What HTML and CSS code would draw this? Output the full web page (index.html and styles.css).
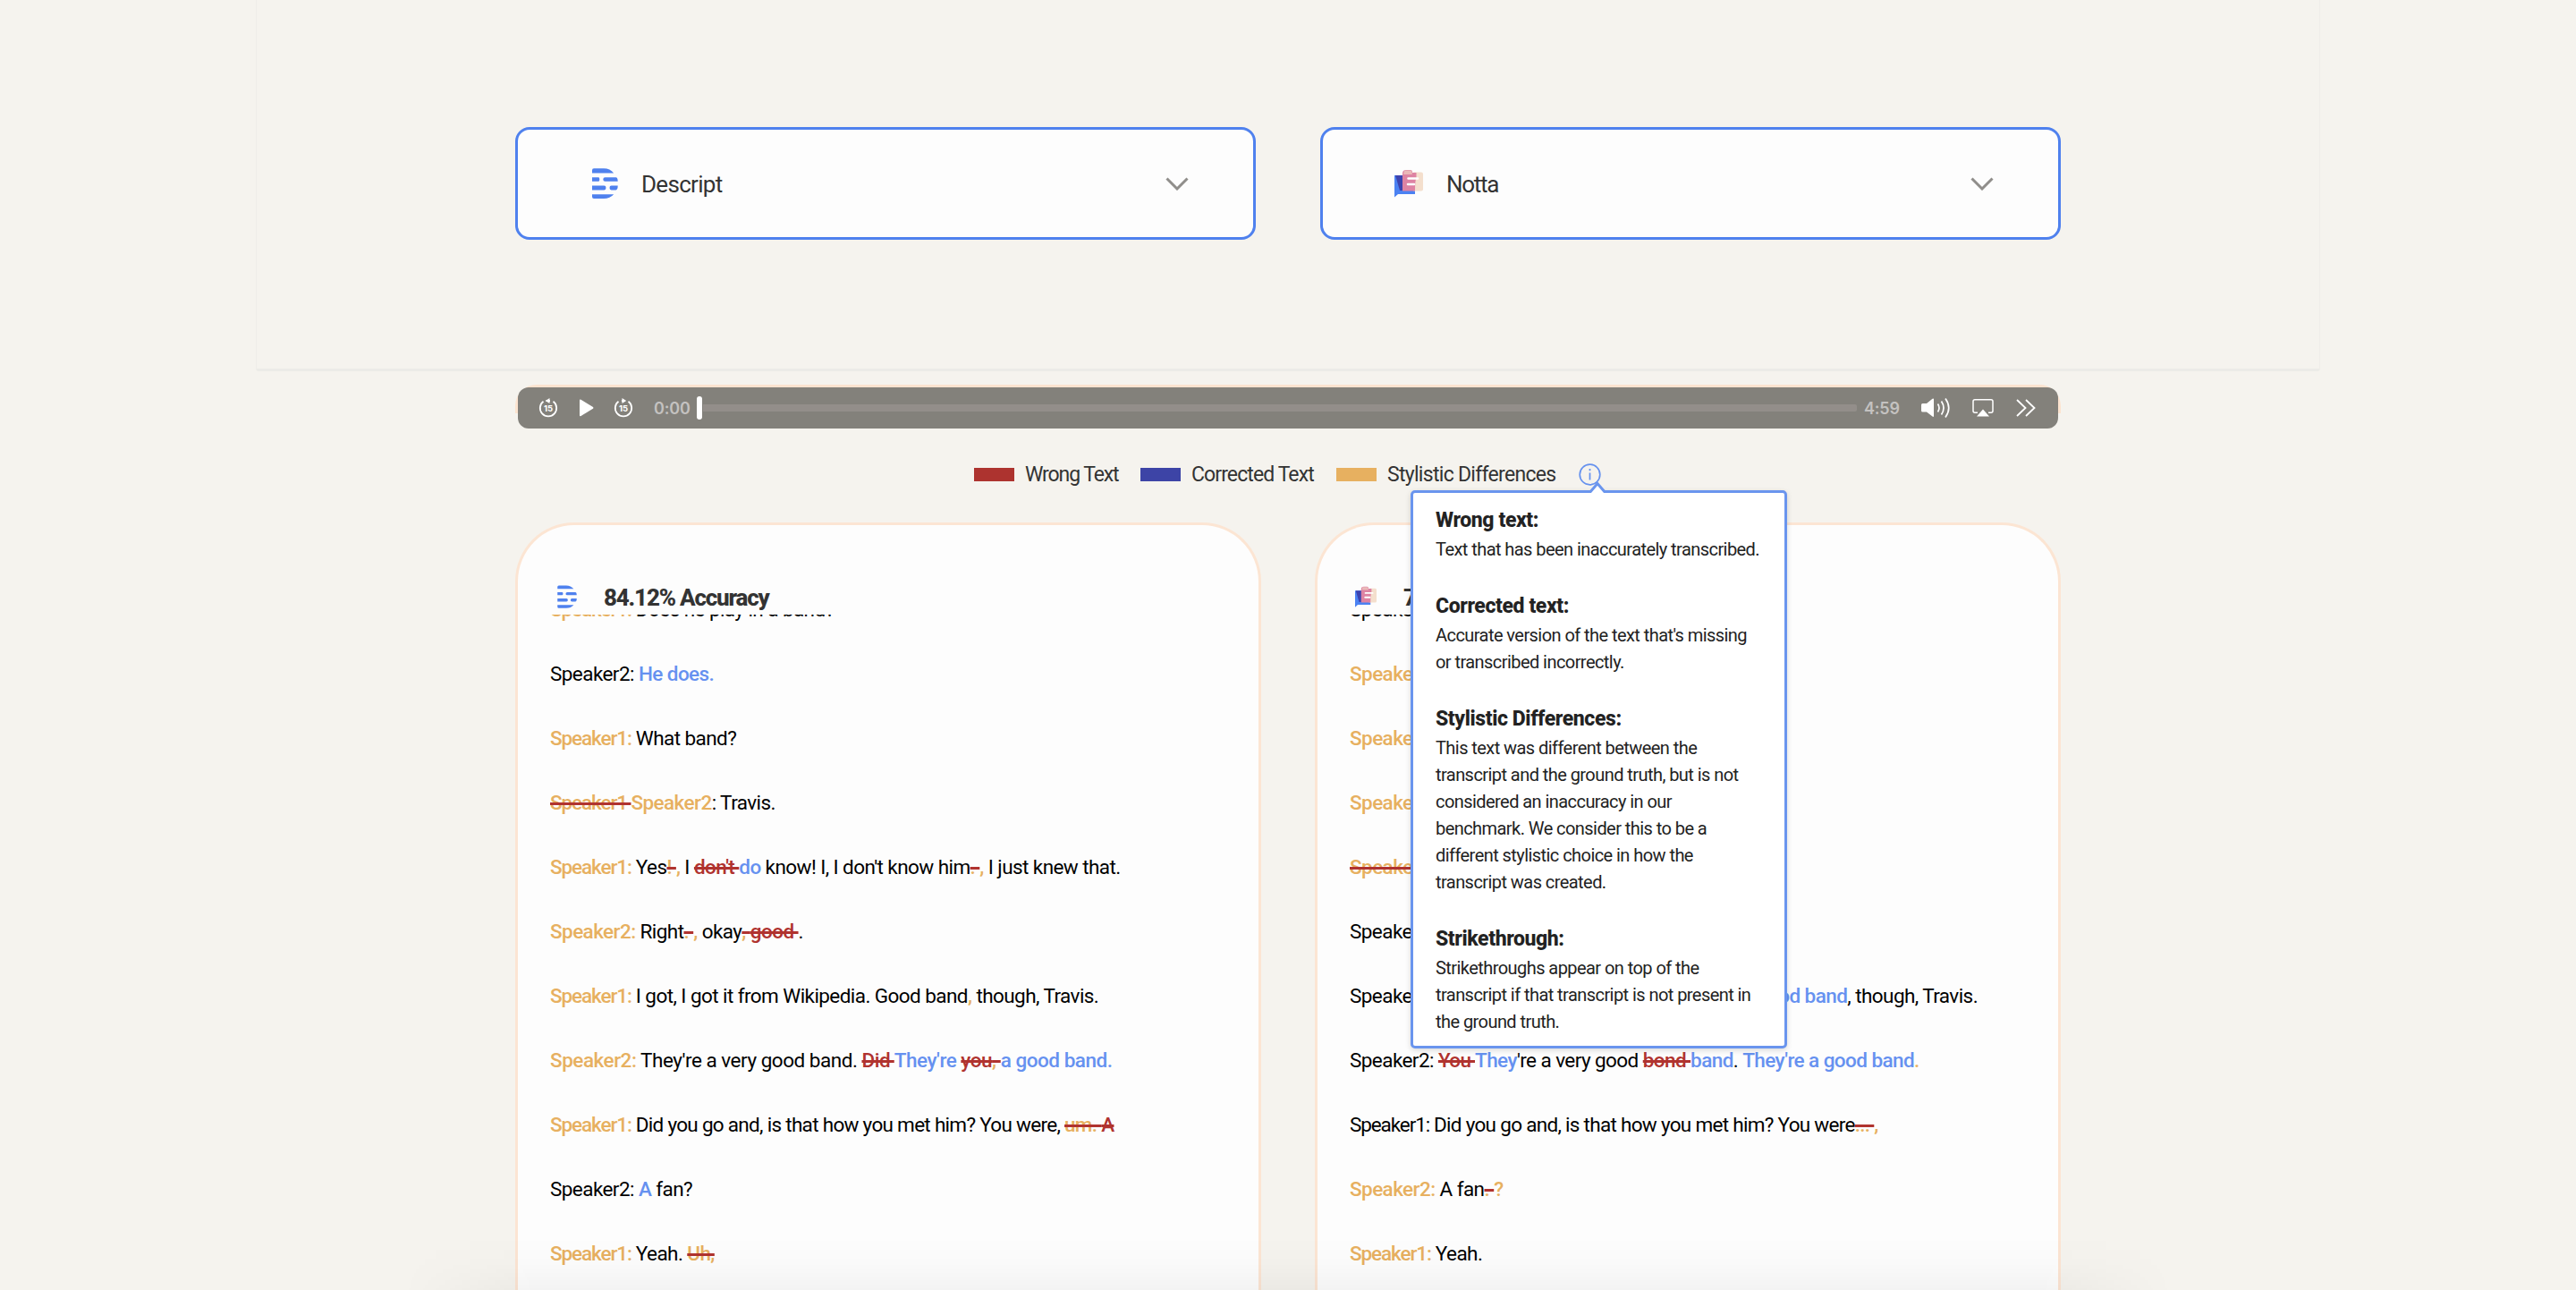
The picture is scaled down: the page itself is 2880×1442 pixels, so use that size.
FILE: index.html
```html
<!DOCTYPE html>
<html lang="en">
<head>
  <meta charset="UTF-8" />
  <meta name="viewport" content="width=device-width, initial-scale=1.0" />
  <title>Transcription Accuracy</title>
  <link rel="stylesheet" href="styles.css">
</head>
<body>
  <!-- shared icons -->
  <svg class="sprite" aria-hidden="true">
    <symbol id="descript" viewBox="0 0 48 48">
      <path d="M11 12.400V9.200Q11 7.200 13 7.200H24Q31 7.200 35.200 12.400ZM11 17.200H18.200Q19.300 17.200 19.300 19.400T18.200 21.800H11ZM25.500 17.200H37.500Q39.700 17.200 39.700 21.800H25.500Q23.300 21.800 23.300 19.500T25.500 17.200ZM11 26.600H24.500Q26.500 26.600 26.500 29T24.500 31.400H11ZM32.500 26.600H39.700Q39.700 31.400 37.500 31.400H32.500Q30.500 31.400 30.500 29T32.500 26.600ZM11 36.300H35.200Q31 41 24 41H13Q11 41 11 39Z" fill="#4f81ee"/>
    </symbol>
    <symbol id="notta" viewBox="0 0 48 48">
      <path d="M8 15H31V36H12L8 39.500Z" fill="#4b82f2"/>
      <path d="M9 15H18V32H14Z" fill="#3d43ae"/>
      <rect x="28" y="11.500" width="12" height="21" rx="2" fill="#f4dfcd"/>
      <path d="M17 13Q17 9 21 9H26Q28 9 28 12H32.500V18Q31 20 31 32.500H17Z" fill="#de83a3"/>
      <path d="M19 9.500H27L28 14H18Z" fill="#eab8b8"/>
      <path d="M23.500 18.500H34M23 25H30" stroke="#fff" stroke-width="2.600" stroke-linecap="round"/>
    </symbol>
    <symbol id="chevron" viewBox="0 0 26 15">
      <path d="M1.500 1.500L13 13L24.500 1.500" fill="none" stroke="#908e8b" stroke-width="3"/>
    </symbol>
  </svg>

  <section class="hero">
    <div class="picker">
      <svg class="logo"><use href="#descript"/></svg>
      <span>Descript</span>
      <svg class="chevron"><use href="#chevron"/></svg>
    </div>
    <div class="picker">
      <svg class="logo"><use href="#notta"/></svg>
      <span class="notta">Notta</span>
      <svg class="chevron"><use href="#chevron"/></svg>
    </div>
  </section>

  <div class="player-wrap">
    <div class="player">
      <svg class="skip" viewBox="0 0 22 22">
        <path d="M5.500 3.800A9.200 9.200 0 1 0 16.500 3.800M8.500 3H13" fill="none" stroke="#fff" stroke-width="1.800"/>
        <path d="M7.800 3L12.500 0V6Z" fill="#fff"/>
        <text x="11" y="15" text-anchor="middle">15</text>
      </svg>
      <svg class="play" viewBox="0 0 17 20"><path d="M1 1.500Q1 0 2.500 .8L16 8.900Q17 9.900 16 10.700L2.500 19Q1 19.700 1 18Z" fill="#fff"/></svg>
      <svg class="skip" viewBox="0 0 22 22">
        <path d="M5.500 3.800A9.200 9.200 0 1 0 16.500 3.800M9 3H13" fill="none" stroke="#fff" stroke-width="1.800"/>
        <path d="M14.200 3L9.500 0V6Z" fill="#fff"/>
        <text x="11" y="15" text-anchor="middle">15</text>
      </svg>
      <span class="time">0:00</span>
      <div class="knob"></div>
      <div class="track"></div>
      <span class="time total">4:59</span>
      <svg class="volume" viewBox="0 0 33 22">
        <path d="M0 7.500Q0 6 1.500 6H6L12.500 .8Q14 0 14 1.500V20Q14 21.500 12.500 20.600L6 15.500H1.500Q0 15.500 0 14Z" fill="#fff"/>
        <path d="M18.500 6.500Q21.500 11 18.500 15.500M22.500 3.500Q27.500 11 22.500 18.500M27 .5Q34.500 11 27 21.500" fill="none" stroke="#fff" stroke-width="1.700"/>
      </svg>
      <svg class="airplay" viewBox="0 0 24 20">
        <path d="M6 15.300H3Q1 15.300 1 13.300V2.700Q1 .8 3 .8H21Q23 .8 23 2.700V13.300Q23 15.300 21 15.300H18" fill="none" stroke="#fff" stroke-width="1.500"/>
        <path d="M5 19.500L12 11.500L19 19.500Z" fill="#fff"/>
      </svg>
      <svg class="more" viewBox="0 0 22 20"><path d="M1 1L10.500 10L1 19M11 1L20.500 10L11 19" fill="none" stroke="#fff" stroke-width="1.800"/></svg>
    </div>
  </div>

  <div class="legend">
    <i class="swatch red"></i><span class="legend-wrong">Wrong Text</span>
    <i class="swatch blue"></i><span class="legend-corrected">Corrected Text</span>
    <i class="swatch gold"></i><span class="legend-style">Stylistic Differences</span>
    <div class="info">
      <svg viewBox="0 0 25 25">
        <circle cx="12.500" cy="12.500" r="11.300" fill="none" stroke="#6591ee" stroke-width="1.700"/>
        <path d="M12.500 10.500V18.500M12.500 6V8.300" stroke="#6591ee" stroke-width="1.700"/>
      </svg>
      <div class="tooltip">
        <svg class="arrow" viewBox="0 0 20 13"><path d="M1 13L10 2.500L19 13" fill="#fff" stroke="#6a95ee" stroke-width="3"/></svg>
        <h4>Wrong text:</h4>
        <p>Text that has been inaccurately transcribed.</p>
        <h4>Corrected text:</h4>
        <p>Accurate version of the text that's missing<br>or transcribed incorrectly.</p>
        <h4>Stylistic Differences:</h4>
        <p>This text was different between the<br>transcript and the ground truth, but is not<br>considered an inaccuracy in our<br>benchmark. We consider this to be a<br>different stylistic choice in how the<br>transcript was created.</p>
        <h4>Strikethrough:</h4>
        <p>Strikethroughs appear on top of the<br>transcript if that transcript is not present in<br>the ground truth.</p>
      </div>
    </div>
  </div>

  <main class="results">
    <article class="card">
      <header>
        <svg class="logo"><use href="#descript"/></svg>
        <h3>84.12% Accuracy</h3>
      </header>
      <div class="transcript">
        <p><span class="style one">Speaker1:</span> Does he play in a band?</p>
        <p>Speaker2: <span class="fix">He does.</span></p>
        <p><span class="style one">Speaker1:</span> What band?</p>
        <p><del class="style one">Speaker1 </del><span class="style">Speaker2</span>: Travis.</p>
        <p><span class="style one">Speaker1:</span> Yes<del class="style">! </del><span class="style">,</span> I <del class="wrong">don't </del><span class="fix">do</span> know! I, I don't know him<del class="style">. </del><span class="style">,</span> I just knew that.</p>
        <p><span class="style">Speaker2:</span> Right<del class="style">. </del><span class="style">,</span> okay<del class="style">, </del><del class="wrong">good </del>.</p>
        <p><span class="style one">Speaker1:</span> I got, I got it from Wikipedia. Good band<span class="style">,</span> though, Travis.</p>
        <p class="wide"><span class="style">Speaker2:</span> They're a very good band. <del class="wrong">Did </del><span class="fix">They're</span> <del class="wrong">you</del><del class="style">, </del><span class="fix">a good band.</span></p>
        <p class="tight"><span class="style one">Speaker1:</span> Did you go and, is that how you met him? You were, <del class="style">um. </del><del class="wrong">A</del></p>
        <p>Speaker2: <span class="fix">A</span> fan?</p>
        <p><span class="style one">Speaker1:</span> Yeah. <del class="style">Uh,</del></p>
      </div>
    </article>

    <article class="card">
      <header>
        <svg class="logo"><use href="#notta"/></svg>
        <h3>7</h3>
      </header>
      <div class="transcript">
        <p>Speaker1:</p>
        <p><span class="style">Speaker2:</span></p>
        <p><span class="style">Speaker1:</span></p>
        <p><span class="style">Speaker2:</span></p>
        <p><del class="style">Speaker1:</del></p>
        <p>Speaker2:</p>
        <p class="split"><span>Speaker1:</span><span><span class="fix">good band</span>, though, Travis.</span></p>
        <p>Speaker2: <del class="wrong">You </del><span class="fix">They</span>'re a very good <del class="wrong">bond </del><span class="fix">band</span>. <span class="fix">They're a good band</span><span class="style">.</span></p>
        <p class="tight"><span class="one">Speaker1:</span> Did you go and, is that how you met him? You were<del class="style">... </del><span class="style">,</span></p>
        <p><span class="style">Speaker2:</span> A fan<del class="style">. </del><span class="style">?</span></p>
        <p><span class="style one">Speaker1:</span> Yeah.</p>
      </div>
    </article>
  </main>
  <div class="shade"></div>
</body>
</html>
```
FILE: styles.css
```css
* {
  box-sizing: border-box;
}
html, body {
  margin: 0;
  padding: 0;
  height: 1442px;
  overflow: hidden;
}
body {
  position: relative;
  display: flex;
  flex-direction: column;
  align-items: center;
  background: #f5f3ee;
  font-family: Roboto, "Liberation Sans", sans-serif;
  color: #333;
}
h3, h4, p {
  margin: 0;
}
.sprite {
  position: absolute;
  width: 0;
  height: 0;
}
.hero {
  display: flex;
  justify-content: center;
  align-items: flex-start;
  gap: 72px;
  width: 2308px;
  height: 415px;
  padding-top: 142px;
  border: 1px solid #efede9;
  border-top: 0;
  border-bottom: 3px solid #ecebe7;
  border-radius: 0 0 3px 3px;
  flex-shrink: 0;
}
.picker {
  display: flex;
  align-items: center;
  width: 828px;
  height: 126px;
  padding: 0 72px;
  background: #fdfdfd;
  border: 3px solid #4f81ee;
  border-radius: 16px;
  font-size: 26px;
  font-weight: 450;
  letter-spacing: -0.7px;
}
.picker span {
  padding-top: 1px;
}
.picker .notta {
  letter-spacing: -1.3px;
}
.picker .logo {
  width: 48px;
  height: 48px;
  margin-right: 18px;
}
.picker .chevron {
  width: 26px;
  height: 15px;
  margin-left: auto;
}

/* audio player */
.player-wrap {
  width: 1728px;
  height: 49px;
  margin-top: 15px;
  padding: 3px 3px 0;
  background: linear-gradient(#fce3cf 32px, transparent 32px);
  border-radius: 24px 24px 0 0;
  flex-shrink: 0;
}
.player {
  display: flex;
  align-items: center;
  height: 46px;
  padding: 0 25px 0 23px;
  background: #83817b;
  border-radius: 12px;
}
.skip {
  width: 22px;
  height: 22px;
}
.skip text {
  font: bold 9.5px Inter, sans-serif;
  fill: #fff;
}
.play {
  width: 17px;
  height: 20px;
  margin: 0 22px 0 23px;
}
.time {
  width: 40px;
  margin-left: 23px;
  font: 600 18px Inter, sans-serif;
  letter-spacing: -0.2px;
  color: #c4c2c0;
}
.knob {
  width: 6px;
  height: 26px;
  margin-left: 8px;
  background: #fff;
  border-radius: 3px;
}
.track {
  flex: 1;
  height: 8px;
  margin-left: 1px;
  background: #938e8a;
  border-radius: 0 2px 2px 0;
}
.time.total {
  margin-left: 8px;
}
.volume {
  width: 33px;
  height: 22px;
  margin-left: 24px;
}
.airplay {
  width: 24px;
  height: 20px;
  margin-left: 24px;
}
.more {
  width: 22px;
  height: 20px;
  margin-left: 25px;
}

/* legend */
.legend {
  display: flex;
  align-items: center;
  width: 702px;
  height: 50px;
  margin-top: 26px;
  font-size: 23px;
  font-weight: 450;
  white-space: nowrap;
  flex-shrink: 0;
}
.swatch {
  width: 45px;
  height: 15px;
  margin-right: 12px;
}
.red {
  background: #ad332f;
}
.blue {
  background: #3d44a6;
}
.gold {
  background: #e7b060;
}
.legend-wrong {
  width: 129px;
  letter-spacing: -1.1px;
}
.legend-corrected {
  width: 162px;
  letter-spacing: -0.9px;
}
.legend-style {
  width: 214px;
  letter-spacing: -0.7px;
}
.info {
  position: relative;
  width: 25px;
  height: 25px;
  flex-shrink: 0;
}
.info > svg {
  display: block;
  width: 25px;
  height: 25px;
}
.tooltip {
  position: absolute;
  left: -188px;
  top: 30px;
  z-index: 2;
  width: 421px;
  height: 624px;
  padding: 14px 24px 0 25px;
  background: #fff;
  border: 3px solid #6a95ee;
  border-radius: 5px;
  box-shadow: 0 2px 6px rgba(0, 0, 0, 0.15);
  font-weight: 400;
  color: #222;
}
.tooltip h4 {
  font-size: 23px;
  line-height: 34px;
  font-weight: 800;
  letter-spacing: -0.4px;
}
.tooltip p {
  margin-bottom: 32px;
  font-size: 20px;
  line-height: 30px;
  letter-spacing: -0.56px;
}
.tooltip p:last-child {
  margin-bottom: 0;
}
.arrow {
  position: absolute;
  left: 196px;
  top: -13px;
  width: 20px;
  height: 13px;
}

/* transcripts */
.results {
  display: flex;
  flex: 1;
  gap: 60px;
  min-height: 0;
  margin-top: 29px;
}
.card {
  width: 834px;
  padding: 0 36px;
  background: #fdfdfd;
  border: 3px solid #fce5d3;
  border-bottom: 0;
  border-radius: 66px 66px 0 0;
}
.card header {
  display: flex;
  align-items: center;
  height: 100px;
  padding-top: 60px;
}
.card .logo {
  width: 36px;
  height: 36px;
  margin-right: 24px;
}
.card h3 {
  padding-top: 2px;
  font-size: 26px;
  font-weight: 800;
  letter-spacing: -1.2px;
}
.transcript {
  overflow: hidden;
  font-size: 22.5px;
  font-weight: 450;
  line-height: 72px;
  letter-spacing: -0.57px;
  color: #000;
  white-space: nowrap;
}
.transcript p:first-child {
  margin-top: -42px;
}
.transcript .wide {
  letter-spacing: -0.48px;
}
.transcript .tight {
  letter-spacing: -0.7px;
}
.transcript .one {
  letter-spacing: -1.1px;
}
.split {
  display: flex;
  justify-content: space-between;
  width: 702px;
}
.transcript del {
  text-decoration: line-through 2.5px #b0332f;
  white-space: pre;
}
.style {
  color: #e7b060;
}
.wrong {
  color: #b0332f;
}
.fix {
  color: #6691f0;
}
.transcript .style,
.transcript .wrong,
.transcript .fix {
  font-weight: 500;
}

/* soft shadow rising from the bottom edge */
.shade {
  position: absolute;
  left: 450px;
  right: 450px;
  bottom: 0;
  height: 60px;
  background: linear-gradient(to top, rgba(0, 0, 0, 0.04), rgba(0, 0, 0, 0.012) 50%, transparent);
  mask-image: linear-gradient(to right, transparent, #000 150px, #000 calc(100% - 150px), transparent);
}
```
